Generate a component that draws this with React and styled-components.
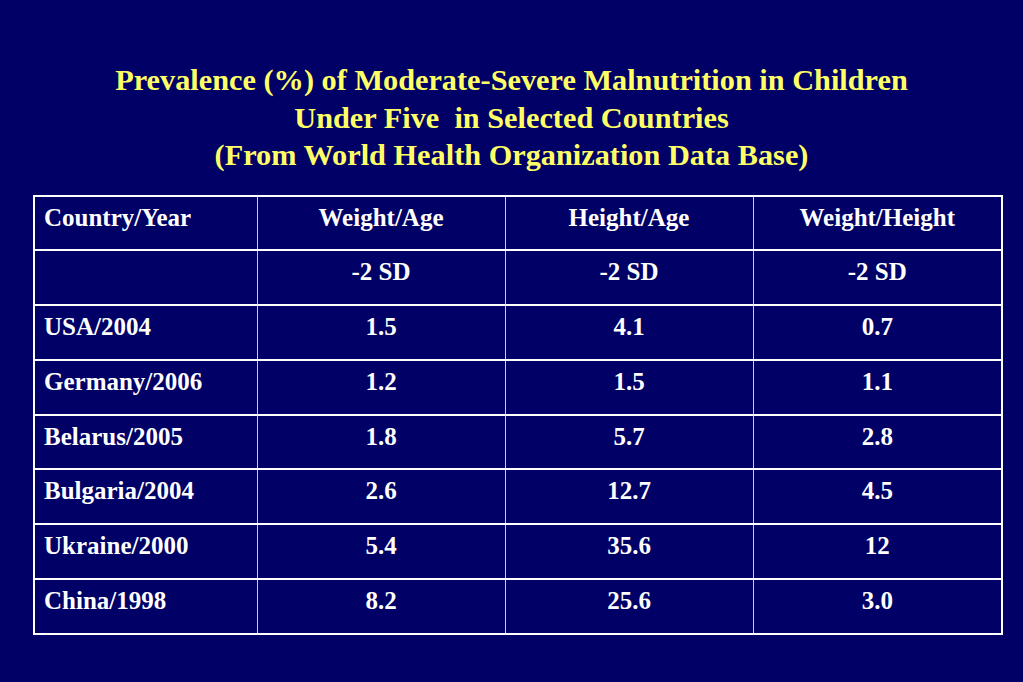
import React from "react";
import styled, { createGlobalStyle } from "styled-components";

const GlobalStyle = createGlobalStyle`
  html, body {
    margin: 0;
    padding: 0;
    background: #000066;
  }
`;

const rows = [
  ["USA/2004", "1.5", "4.1", "0.7"],
  ["Germany/2006", "1.2", "1.5", "1.1"],
  ["Belarus/2005", "1.8", "5.7", "2.8"],
  ["Bulgaria/2004", "2.6", "12.7", "4.5"],
  ["Ukraine/2000", "5.4", "35.6", "12"],
  ["China/1998", "8.2", "25.6", "3.0"],
];

const App = () => {
  return (
    <Slide>
      <GlobalStyle />
      <Title>
        Prevalence (%) of Moderate-Severe Malnutrition in Children
        <br />
        Under Five&nbsp; in Selected Countries
        <br />
        (From World Health Organization Data Base)
      </Title>
      <Table>
        <colgroup>
          <col style={{ width: 223 }} />
          <col style={{ width: 248 }} />
          <col style={{ width: 248 }} />
          <col style={{ width: 249 }} />
        </colgroup>
        <tbody>
          <tr>
            <Cell>Country/Year</Cell>
            <Cell $center>Weight/Age</Cell>
            <Cell $center>Height/Age</Cell>
            <Cell $center>Weight/Height</Cell>
          </tr>
          <tr>
            <Cell></Cell>
            <Cell $center>-2 SD</Cell>
            <Cell $center>-2 SD</Cell>
            <Cell $center>-2 SD</Cell>
          </tr>
          {rows.map((r) => (
            <tr key={r[0]}>
              {r.map((v, i) => (
                <Cell key={i} $center={i > 0}>
                  {v}
                </Cell>
              ))}
            </tr>
          ))}
        </tbody>
      </Table>
    </Slide>
  );
};

export default App;

const Slide = styled.div`
  width: 1023px;
  height: 682px;
  background: #000066;
  box-sizing: border-box;
  padding-top: 62px;
  display: flex;
  flex-direction: column;
  align-items: center;
  font-family: "Liberation Serif", "Times New Roman", serif;
  overflow: hidden;
`;

const Title = styled.h1`
  margin: 0 0 20px;
  color: #ffff66;
  font-size: 30.3px;
  line-height: 37.5px;
  font-weight: bold;
  text-align: center;
`;

const Table = styled.table`
  width: 968px;
  align-self: flex-start;
  margin-left: 33px;
  border-collapse: collapse;
  table-layout: fixed;
  border: 2px solid #ffffff;

  tr {
    height: 54.75px;
  }
`;

const Cell = styled.td`
  box-sizing: border-box;
  vertical-align: top;
  padding: 7px 9px 3px;
  color: #ffffff;
  font-size: 25px;
  font-weight: bold;
  text-align: ${(p) => (p.$center ? "center" : "left")};
  border-top: 2px solid #ffffff;
  border-bottom: 2px solid #ffffff;
  border-left: 1px solid #c8c8f0;
  border-right: 1px solid #c8c8f0;

  &:first-child {
    border-left: 2px solid #ffffff;
  }
  &:last-child {
    border-right: 2px solid #ffffff;
  }
`;
